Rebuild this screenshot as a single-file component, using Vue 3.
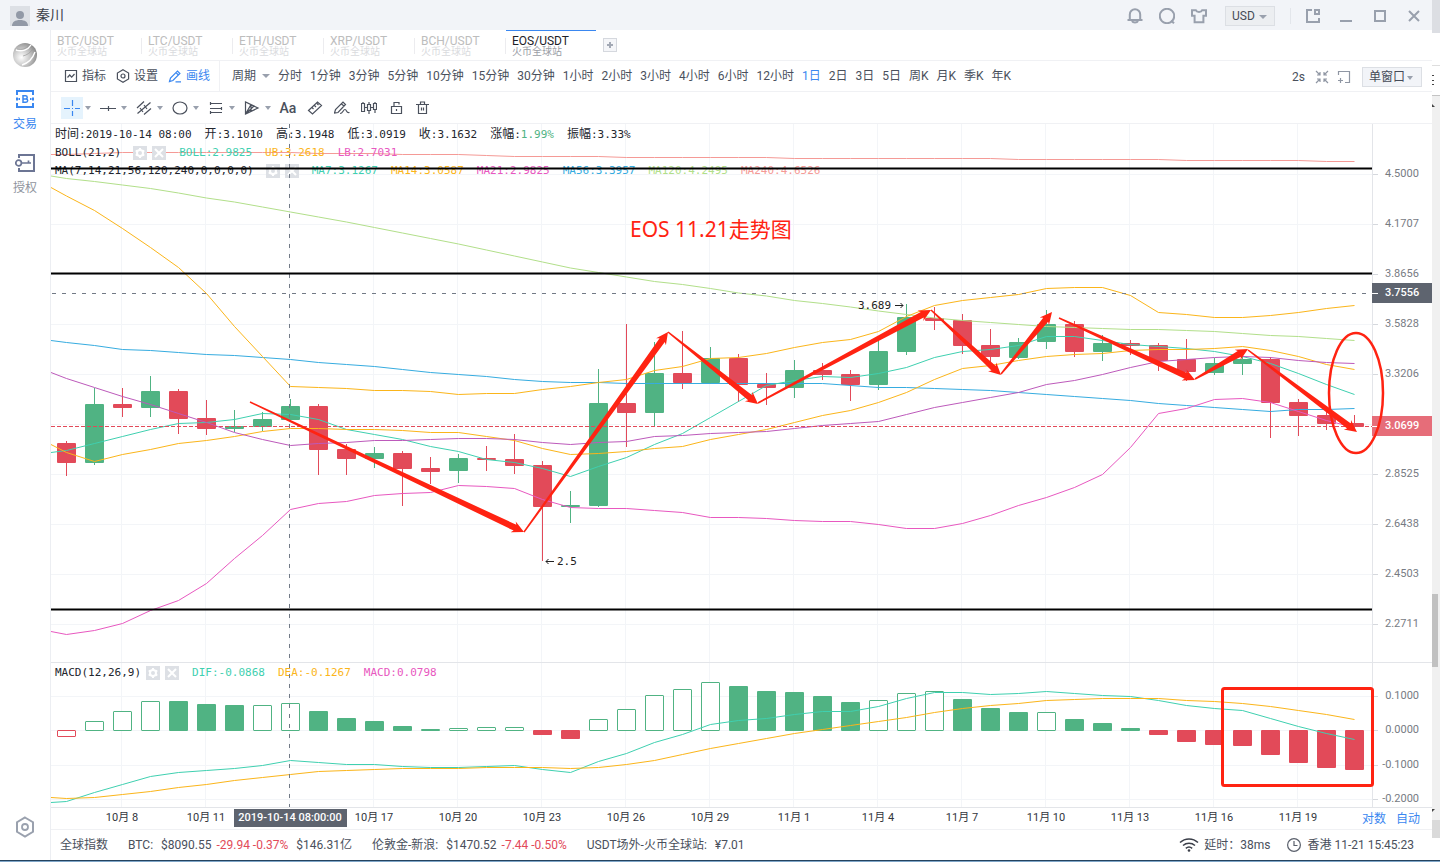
<script setup>
import { ref } from 'vue'

const tabs = ['BTC/USDT', 'LTC/USDT', 'ETH/USDT', 'XRP/USDT', 'BCH/USDT', 'EOS/USDT']
const activeTab = ref('EOS/USDT')
const periods = ['分时', '1分钟', '3分钟', '5分钟', '10分钟', '15分钟', '30分钟', '1小时', '2小时', '3小时', '4小时', '6小时', '12小时', '1日', '2日', '3日', '5日', '周K', '月K', '季K', '年K']
const activePeriod = ref('1日')

const STEP = 28
const LEFT = 51
const center = (i) => 66.5 + STEP * i

// direction, high, body top, body bottom, low
const candles = [
  ['d', 441, 443, 463, 476], ['u', 388, 404, 463, 465], ['d', 388, 404, 408, 417], ['u', 376, 391, 408, 417],
  ['d', 389, 391, 419, 434], ['d', 400, 418, 429, 435], ['u', 410, 426, 429, 432], ['u', 412, 419, 427, 431],
  ['u', 399, 406, 420, 422], ['d', 404, 406, 450, 475], ['d', 444, 449, 459, 475], ['u', 447, 453, 459, 468],
  ['d', 451, 453, 469, 506], ['d', 457, 468, 472, 484], ['u', 454, 458, 471, 483], ['d', 446, 458, 460, 471],
  ['d', 434, 459, 466, 474], ['d', 461, 465, 507, 561], ['u', 491, 505, 507, 523], ['u', 369, 403, 506, 507],
  ['d', 324, 403, 413, 447], ['u', 342, 373, 413, 426], ['d', 331, 373, 383, 389], ['u', 347, 358, 383, 384],
  ['d', 354, 358, 385, 402], ['d', 373, 384, 388, 405], ['u', 360, 370, 388, 398], ['d', 363, 370, 375, 380],
  ['d', 370, 374, 385, 401], ['u', 340, 351, 385, 390], ['u', 304, 317, 352, 355], ['d', 307, 318, 321, 330],
  ['d', 314, 320, 346, 354], ['d', 329, 345, 357, 363], ['u', 338, 342, 358, 359], ['u', 310, 324, 342, 349],
  ['d', 321, 324, 352, 357], ['u', 335, 343, 352, 361], ['d', 340, 343, 346, 355], ['d', 343, 345, 361, 371],
  ['d', 339, 359, 372, 381], ['u', 358, 363, 373, 375], ['u', 354, 359, 364, 375], ['d', 357, 359, 403, 438],
  ['d', 399, 402, 416, 436], ['d', 410, 415, 424, 430], ['d', 415, 423, 427, 428]
]

// each series starts on the left edge of the plot, then has one value per candle
const priceLines = [
  { color: '#f59a96', y: [154.5, 154.5, 153.5, 152.5, 152.5, 152.5, 152.5, 152.5, 152.5, 152.5, 153.5, 153.5, 153.5, 154.5, 154.5, 154.5, 155.5, 156.5, 156.5, 156.5, 156.5, 157.5, 157.5, 157.5, 157.5, 157.5, 157.5, 158.5, 158.5, 158.5, 158.5, 158.5, 158.5, 158.5, 158.5, 159.5, 159.5, 159.5, 159.5, 159.5, 159.5, 160.5, 160.5, 160.5, 160.5, 160.5, 161.5, 161.5] },
  { color: '#b2df8a', y: [176, 178.5, 181.5, 185, 188.5, 193, 198, 202, 207, 212, 217, 222, 227.5, 233, 238.5, 244, 250, 256, 262, 268, 272.5, 277, 281.5, 284.5, 288.5, 293, 296, 300.5, 303.5, 307, 311, 314.5, 318, 320.5, 322.5, 324.5, 326.5, 327.5, 328.5, 329.5, 329.5, 330.5, 331.5, 333.5, 335.5, 336.5, 338.5, 340.5] },
  { color: '#36ace0', y: [340.5, 342.5, 345.5, 349.5, 350.5, 352.5, 354.5, 355.5, 357.5, 359.5, 362.5, 364.5, 366.5, 369.5, 372.5, 374.5, 376.5, 379.5, 381.5, 382.5, 382.5, 383.5, 383.5, 383.5, 383.5, 383.5, 383.5, 383.5, 383.5, 385.5, 387.5, 387.5, 388.5, 389.5, 390.5, 392.5, 394.5, 396.5, 398.5, 400.5, 403.5, 405.5, 407.5, 409.5, 411.5, 409.5, 409.5, 408.5] },
  { color: '#fbb51a', y: [187.5, 196, 210.5, 228.5, 247.5, 267.5, 293.5, 326.5, 356.5, 386.5, 387.5, 388.5, 390.5, 390.5, 391.5, 394.5, 393.5, 393.5, 389.5, 386.5, 382.5, 379.5, 370.5, 366.5, 358.5, 357.5, 353.5, 347.5, 342.5, 339.5, 331.5, 316.5, 305.5, 300.5, 297.5, 294.5, 288.5, 287.5, 287.5, 295.5, 312.5, 314.5, 317.5, 317.5, 315.5, 312.5, 308.5, 305.5] },
  { color: '#e858c0', y: [631.5, 634.5, 630.5, 623.5, 610.5, 600.5, 583.5, 558.5, 535.5, 509.5, 503.5, 501.5, 495.5, 493.5, 492.5, 485.5, 486.5, 488.5, 499.5, 507.5, 508.5, 508.5, 510.5, 512.5, 517.5, 517.5, 518.5, 520.5, 521.5, 521.5, 524.5, 528.5, 528.5, 523.5, 515.5, 505.5, 497.5, 487.5, 474.5, 447.5, 413.5, 408.5, 399.5, 398.5, 402.5, 411.5, 420.5, 427.5] },
  { color: '#3fd0b0', y: [452.5, 450.5, 443.5, 436.5, 429.5, 423.5, 422.5, 419.5, 413.5, 414.5, 419.5, 429.5, 434.5, 439.5, 446.5, 451.5, 459.5, 462.5, 468.5, 476.5, 466.5, 457.5, 444.5, 433.5, 417.5, 401.5, 385.5, 380.5, 376.5, 377.5, 373.5, 367.5, 357.5, 351.5, 349.5, 345.5, 336.5, 336.5, 340.5, 344.5, 346.5, 348.5, 351.5, 356.5, 363.5, 373.5, 384.5, 394.5] },
  { color: '#fbb51a', y: [444.5, 452.5, 461.5, 454.5, 449.5, 443.5, 440.5, 436.5, 431.5, 428.5, 428.5, 429.5, 429.5, 430.5, 432.5, 432.5, 436.5, 440.5, 448.5, 454.5, 453.5, 451.5, 448.5, 446.5, 439.5, 434.5, 429.5, 422.5, 415.5, 410.5, 402.5, 392.5, 379.5, 368.5, 365.5, 360.5, 356.5, 354.5, 353.5, 350.5, 349.5, 349.5, 348.5, 346.5, 350.5, 356.5, 364.5, 369.5] },
  { color: '#bd5abb', y: [372.5, 378.5, 387.5, 396.5, 404.5, 413.5, 422.5, 432.5, 439.5, 445.5, 443.5, 442.5, 440.5, 440.5, 439.5, 438.5, 438.5, 439.5, 442.5, 444.5, 442.5, 441.5, 436.5, 435.5, 433.5, 432.5, 431.5, 428.5, 425.5, 423.5, 421.5, 414.5, 407.5, 402.5, 397.5, 392.5, 384.5, 380.5, 374.5, 367.5, 361.5, 359.5, 357.5, 356.5, 357.5, 360.5, 362.5, 363.5] }
]

const macdLines = [
  { color: '#3fd0b0', y: [802.5, 801.5, 792.5, 784.5, 776.5, 772.5, 770.5, 768.5, 765.5, 760.5, 762.5, 764.5, 764.5, 766.5, 767.5, 767.5, 766.5, 765.5, 769.5, 772.5, 761.5, 753.5, 742.5, 734.5, 724.5, 720.5, 718.5, 714.5, 711.5, 711.5, 706.5, 698.5, 692.5, 692.5, 694.5, 693.5, 691.5, 693.5, 695.5, 696.5, 700.5, 705.5, 708.5, 710.5, 718.5, 726.5, 733.5, 739.5] },
  { color: '#fbb51a', y: [797.5, 798.5, 797.5, 794.5, 791.5, 787.5, 784.5, 780.5, 777.5, 774.5, 771.5, 770.5, 769.5, 768.5, 768.5, 768.5, 767.5, 767.5, 767.5, 768.5, 767.5, 764.5, 760.5, 754.5, 748.5, 743.5, 738.5, 733.5, 729.5, 725.5, 721.5, 717.5, 712.5, 708.5, 705.5, 703.5, 700.5, 699.5, 698.5, 698.5, 698.5, 700.5, 701.5, 703.5, 706.5, 710.5, 714.5, 719.5] }
]

const points = (y) => y.map((v, k) => `${k === 0 ? LEFT : center(k - 1)},${v}`).join(' ')

// far edge of each bar; a negative value is a bar drawn as an outline
const ZERO = 730
const macdBars = [-737, -721, -711, -701, 701, 704, 705, -705, -703, 711, 718, 721, 726, 729, -728, -727, -727, 735, 739, -719, -709, -695, -689, -682, 686, 691, 692, 696, 702, -700, -693, -691, 699, 708, 712, -712, 719, 723, 728, 735, 742, 745, 746, 755, 763, 768, 770]
const bars = macdBars.map((v, i) => {
  const edge = Math.abs(v)
  const down = edge > 731
  return {
    x: 57 + STEP * i,
    y: down ? ZERO : edge,
    h: down ? edge - ZERO : 731 - edge,
    hollow: v < 0,
    color: down ? '#e24a59' : '#50b383'
  }
})

const gridX = Array.from({ length: 15 }, (_, i) => 121.5 + 84 * i)
const priceTicks = [
  [174.5, '4.5000'], [224.5, '4.1707'], [274.5, '3.8656'], [324.5, '3.5828'], [374.5, '3.3206'],
  [424.5, ''], [474.5, '2.8525'], [524.5, '2.6438'], [574.5, '2.4503'], [624.5, '2.2711']
]
const macdTicks = [[696.5, '0.1000'], [730.5, '0.0000'], [765.5, '-0.1000'], [799.5, '-0.2000']]
const dates = ['10月 8', '10月 11', '', '10月 17', '10月 20', '10月 23', '10月 26', '10月 29', '11月 1', '11月 4', '11月 7', '11月 10', '11月 13', '11月 16', '11月 19']

const arrow = ([x1, y1, x2, y2]) => {
  const len = Math.hypot(x2 - x1, y2 - y1)
  const ux = (x2 - x1) / len
  const uy = (y2 - y1) / len
  const at = (d, s) => `${(x1 + ux * d - uy * s).toFixed(1)},${(y1 + uy * d + ux * s).toFixed(1)}`
  return [at(0, 0.8), at(len - 10, 3.2), at(len - 12, 6), at(len, 0), at(len - 12, -6), at(len - 10, -3.2), at(0, -0.8)].join(' ')
}
const arrows = [
  [250, 402, 524, 532], [524, 532, 668, 332], [668, 332, 758, 404], [758, 403, 931, 310], [931, 310, 1001, 375],
  [1001, 374, 1052, 312], [1059, 318, 1195, 380], [1195, 379, 1248, 349], [1248, 350, 1357, 432]
].map(arrow)

const ohlc = [
  ['时间', '2019-10-14 08:00'], ['开', '3.1010'], ['高', '3.1948'], ['低', '3.0919'], ['收', '3.1632'],
  ['涨幅', '1.99%', 'gain'], ['振幅', '3.33%']
]
const legends = [
  { name: 'BOLL(21,2)', items: [['BOLL:2.9825', '#3fd0b0'], ['UB:3.2618', '#fbb51a'], ['LB:2.7031', '#e858c0']] },
  { name: 'MA(7,14,21,56,120,240,0,0,0,0)', items: [['MA7:3.1267', '#3fd0b0'], ['MA14:3.0587', '#fbb51a'], ['MA21:2.9825', '#e858c0'], ['MA56:3.3957', '#36ace0'], ['MA120:4.2495', '#b2df8a'], ['MA240:4.6526', '#f59a96']] }
]
const macdLegend = { name: 'MACD(12,26,9)', items: [['DIF:-0.0868', '#3fd0b0'], ['DEA:-0.1267', '#fbb51a'], ['MACD:0.0798', '#e858c0']] }

const gear = 'M7 2v2M7 10v2M2.7 4.5l1.700 1M9.600 8.500l1.700 1M2.700 9.500l1.700-1M9.600 5.500l1.700-1'
const quotes = [
  { name: 'BTC:', price: '$8090.55', change: '-29.94 -0.37%', extra: '$146.31亿' },
  { name: '伦敦金-新浪:', price: '$1470.52', change: '-7.44 -0.50%' },
  { name: 'USDT场外-火币全球站:', price: '¥7.01' }
]
</script>

<template>
  <div class="screen">
    <div class="window">
      <header class="titlebar">
        <svg class="avatar" viewBox="0 0 20 20"><rect width="20" height="20" fill="#dde0e5" /><circle cx="10" cy="9" r="4" fill="#9299a6" /><path d="M2 20c0-4 3-6 8-6s8 2 8 6z" fill="#9299a6" /></svg>
        <span class="user">秦川</span>
        <div class="grow"></div>
        <button class="t-btn" aria-label="通知"><svg viewBox="0 0 16 16"><path d="M0.500 12h15M2.800 12V6.500a5.200 5.200 0 0 1 10.400 0V12M5 13a3.200 2.400 0 0 0 6 0" /></svg></button>
        <button class="t-btn" aria-label="消息"><svg viewBox="0 0 16 16"><circle cx="8" cy="8" r="7.2" /><path d="M12 12.5l3 2.8" /></svg></button>
        <button class="t-btn" aria-label="皮肤"><svg viewBox="0 0 16 16"><path d="M1 2.2h3.8c1 2.4 5.4 2.4 6.4 0H15v5.6h-2.6v6.4H3.6V7.8H1z" /></svg></button>
        <div class="select usd">
          <select aria-label="计价货币"><option>USD</option></select>
          <svg viewBox="0 0 8 4"><path d="M0 0h8l-4 4z" /></svg>
        </div>
        <i class="sep"></i>
        <button class="w-btn" aria-label="弹出"><svg viewBox="0 0 16 16"><path d="M8 2H3v12h12V10M11 2h4v4h-4z" /></svg></button>
        <button class="w-btn" aria-label="最小化"><svg viewBox="0 0 16 16"><path d="M2 13h12" /></svg></button>
        <button class="w-btn" aria-label="最大化"><svg viewBox="0 0 16 16"><path d="M3 3h10v10H3z" /></svg></button>
        <button class="w-btn" aria-label="关闭"><svg viewBox="0 0 16 16"><path d="M3 3l10 10M13 3L3 13" /></svg></button>
      </header>

      <div class="body">
        <nav class="side">
          <svg class="globe" viewBox="0 0 24 24">
            <defs><radialGradient id="ball" cx="0.35" cy="0.6" r="0.7"><stop offset="0" stop-color="#fff" /><stop offset="0.5" stop-color="#c9c9c9" /><stop offset="1" stop-color="#858585" /></radialGradient></defs>
            <circle cx="12" cy="12" r="12" fill="url(#ball)" />
            <path d="M3 7c6 2 12 0 15-5M9 22c6-2 11-7 13-13" fill="none" stroke="#fff" stroke-width="1.4" />
            <path d="M4 6c5 1 9 0 12-4M20 6c-3 4-6 6-10 7" fill="none" stroke="#999" stroke-width="0.7" />
          </svg>
          <a href="#trade" class="s-item on">
            <svg viewBox="0 0 20 20"><path d="M2 6V2h16v4M18 14v4H2v-4M2 8.5v3M18 8.5v3M3.5 10H5M15 10h1.5" stroke-width="2" /><path d="M8 6.7h2.6a1.6 1.6 0 0 1 0 3.2H8zM8 9.9h3a1.7 1.7 0 0 1 0 3.4H8z" stroke-width="1.5" /></svg>
            <span>交易</span>
          </a>
          <a href="#auth" class="s-item">
            <svg viewBox="0 0 20 20"><path d="M4 5V2h15v16H4v-3" stroke-width="2" /><circle cx="3.6" cy="10" r="2.8" stroke-width="1.7" /><path d="M6.4 10H16M13.5 10V7.5" stroke-width="1.7" /></svg>
            <span>授权</span>
          </a>
          <div class="grow"></div>
          <button class="s-set" aria-label="设置"><svg viewBox="0 0 20 22"><path d="M10 1.5l8 4.7v9.6l-8 4.7-8-4.7V6.2z" stroke-width="2" /><circle cx="10" cy="11" r="3" stroke-width="1.8" /></svg></button>
        </nav>

        <main class="main">
          <div class="tabs">
            <button v-for="t in tabs" :key="t" class="tab" :class="{ active: t === activeTab }" @click="activeTab = t">
              <span>{{ t }}</span><small>火币全球站</small>
            </button>
            <button class="add" aria-label="添加"><svg viewBox="0 0 8 8"><path d="M4 1v6M1 4h6" /></svg></button>
          </div>

          <div class="bar">
            <div class="modes">
              <button><svg viewBox="0 0 14 14"><path d="M1.5 1.5h11v11h-11zM3.5 8.5l2.2-2.5 2 2.2L10.5 5" /></svg>指标</button>
              <button><svg viewBox="0 0 14 14"><path d="M7 0.8l5.6 3.2v6L7 13.2 1.4 10V4z" /><circle cx="7" cy="7" r="2" /></svg>设置</button>
              <button class="blue"><svg viewBox="0 0 14 14"><path d="M1.5 12.5l1-3.4 7-7 2.4 2.4-7 7zM8 3.6l2.4 2.4M7.5 12.8H13" /></svg>画线</button>
            </div>
            <div class="cycle"><button>周期<svg viewBox="0 0 8 4"><path d="M0 0h8l-4 4z" /></svg></button></div>
            <div class="periods">
              <button v-for="p in periods" :key="p" :class="{ blue: p === activePeriod }" @click="activePeriod = p">{{ p }}</button>
            </div>
            <div class="grow"></div>
            <div class="tail">
              <span>2s</span>
              <button aria-label="收起"><svg viewBox="0 0 14 14"><path d="M1 1l3.500 3.500M5 2v3H2M13 1L9.500 4.500M9 2v3h3M1 13l3.500-3.500M5 12V9H2M13 13L9.500 9.500M9 12V9h3" /></svg></button>
              <button aria-label="新窗口"><svg viewBox="0 0 14 14"><path d="M1.500 5V1.500h11v11H8M3.500 8v5M1 10.500h5" /></svg></button>
              <div class="select pane">
                <select aria-label="窗口布局"><option>单窗口</option></select>
                <svg viewBox="0 0 8 4"><path d="M1 0h6l-3 4z" /></svg>
              </div>
            </div>
          </div>

          <div class="tools">
            <button class="tool on" aria-label="十字线"><svg viewBox="0 0 16 16"><path d="M8.500 0v6M8.500 11v5M0 8.500h6M11 8.500h5M8 8.500h1" /></svg></button><i class="caret"></i>
            <button class="tool" aria-label="直线"><svg viewBox="0 0 16 16"><path d="M0 8.500h16M8.500 6v5" /></svg></button><i class="caret"></i>
            <button class="tool" aria-label="平行线"><svg viewBox="0 0 16 16"><path d="M1 8L8 1.500M1.500 13.500L14.500 2.500M8 14.500L15 8.500M4 8l3 4M8 5l3 4" /></svg></button><i class="caret"></i>
            <button class="tool" aria-label="椭圆"><svg viewBox="0 0 16 16"><ellipse cx="8" cy="8" rx="7" ry="6" /></svg></button><i class="caret"></i>
            <button class="tool" aria-label="水平线"><svg viewBox="0 0 16 16"><path d="M2 3.500h12M2 8.500h12M2 12.500h12M2.500 2v3M13.500 7v3M2.500 11v3" /></svg></button><i class="caret"></i>
            <button class="tool" aria-label="扇形线"><svg viewBox="0 0 16 16"><path d="M1.500 2v12L14 8zM1.500 14L7 4.600M1.500 14L10 6M7 5v6" /></svg></button><i class="caret"></i>
            <div class="plain">
              <button class="tool text">Aa</button>
              <button class="tool" aria-label="标尺"><svg viewBox="0 0 16 16"><path d="M1.500 10.500l9-8.500 4 3.500-9 8.500zM5 7.500l1.500 1.500M7.500 5.500L9 7M10 3.500L11.500 5" /></svg></button>
              <button class="tool" aria-label="画笔"><svg viewBox="0 0 16 16"><path d="M0.500 13l1-3.500 7.500-7.500 2.500 2.500L4 12.500zM7.500 4L10 6M6 13.500c3 0 3-4 5-4s1 4 4.500 3" /></svg></button>
              <button class="tool" aria-label="K线"><svg viewBox="0 0 16 16"><path d="M0.500 3.500h3v8h-3zM6.500 4.500h3v6h-3zM12.500 3.500h3v6h-3zM2 2v1.500M8 2v2.500M8 10.500V14M14 2v1.500M14 9.500V13M3.500 7.500h3M9.500 7.500h3" /></svg></button>
              <button class="tool" aria-label="锁定"><svg viewBox="0 0 16 16"><path d="M3.500 6.500h10v7h-10zM6 6.500V2.500h5v2M8.500 9v2" /></svg></button>
              <button class="tool" aria-label="删除"><svg viewBox="0 0 16 16"><path d="M1 4.500h13M3.500 4.500v9h8v-9M5.500 4V2h4v2M6.500 7.500v3M8.500 7.500v3" /></svg></button>
            </div>
          </div>

          <section class="panel">
            <svg class="plot" viewBox="51 124 1381 539">
              <g stroke="#f3f5f8">
                <line v-for="x in gridX" :key="x" :x1="x" :x2="x" y1="124" y2="662" />
                <line v-for="t in priceTicks" :key="t[0]" x1="51" x2="1372" :y1="t[0]" :y2="t[0]" />
              </g>
              <path d="M1372.500 124V663M51 662.500H1432" stroke="#e3e5e9" />
              <g stroke="#d5d8dd"><line v-for="t in priceTicks" :key="t[0]" x1="1373" x2="1378" :y1="t[0]" :y2="t[0]" /></g>
              <g v-for="(c, i) in candles" :key="i" :fill="c[0] === 'u' ? '#50b383' : '#e24a59'">
                <rect :x="66 + 28 * i" :y="c[1]" width="1" :height="c[4] - c[1]" />
                <rect :x="57 + 28 * i" :y="c[2]" width="19" :height="c[3] - c[2]" rx="1" />
              </g>
              <polyline v-for="(l, i) in priceLines" :key="i" :points="points(l.y)" fill="none" :stroke="l.color" />
            </svg>
            <div class="legend">
              <div class="row first">
                <span v-for="o in ohlc" :key="o[0]"><b>{{ o[0] }}</b>:<em :class="o[2]">{{ o[1] }}</em></span>
              </div>
              <div v-for="l in legends" :key="l.name" class="row">
                <span>{{ l.name }}</span>
                <div class="ops">
                  <button aria-label="设置指标"><svg viewBox="0 0 14 14"><path :d="gear" /><circle cx="7" cy="7" r="3" /></svg></button>
                  <button aria-label="移除指标"><svg viewBox="0 0 14 14"><path d="M3 3l8 8M11 3l-8 8" /></svg></button>
                </div>
                <span v-for="m in l.items" :key="m[0]" :style="{ color: m[1] }">{{ m[0] }}</span>
              </div>
            </div>
            <svg class="plot marks" viewBox="51 124 1381 539">
              <path d="M51 426.500H1372" stroke="#e24a59" stroke-dasharray="4 2" />
              <path d="M52 293.500H1372M289.500 124V662" stroke="#727a86" stroke-dasharray="4 6" />
              <path d="M51 168.500H1372M51 273.500H1372M51 609.500H1372" stroke="#000" stroke-width="2" />
              <g class="axis"><text v-for="t in priceTicks" :key="t[0]" x="1385" :y="t[0] + 2.5">{{ t[1] }}</text></g>
              <g class="mono">
                <text x="858" y="309">3.689</text><text x="557" y="565">2.5</text>
                <path d="M895 305.500h8M900.500 303l2.500 2.500-2.500 2.500M554 561.500h-8M548.500 559l-2.500 2.500 2.500 2.500" fill="none" stroke="#222" />
              </g>
              <g class="flag">
                <rect x="1372" y="283" width="60" height="20" fill="#5e646f" /><text x="1385" y="296">3.7556</text>
                <rect x="1372" y="416" width="60" height="20" fill="#e66d79" /><text x="1385" y="429">3.0699</text>
                <path d="M1372 293.500h6M1372 426.500h6" stroke="#fff" />
              </g>
              <g fill="#ff2312">
                <polygon v-for="a in arrows" :key="a" :points="a" />
                <text class="note" x="630" y="237">EOS 11.21走势图</text>
              </g>
              <ellipse cx="1356" cy="393" rx="27" ry="60" fill="none" stroke="#ff2312" stroke-width="2.500" />
            </svg>
          </section>

          <section class="panel">
            <svg class="plot" viewBox="51 663 1381 166">
              <g stroke="#f3f5f8">
                <line v-for="x in gridX" :key="x" :x1="x" :x2="x" y1="663" y2="807" />
                <line v-for="t in macdTicks" :key="t[0]" x1="51" x2="1372" :y1="t[0]" :y2="t[0]" />
              </g>
              <path d="M1372.500 663V807M51 807.500H1432" stroke="#e3e5e9" />
              <g stroke="#d5d8dd"><line v-for="t in macdTicks" :key="t[0]" x1="1373" x2="1378" :y1="t[0]" :y2="t[0]" /></g>
              <template v-for="b in bars" :key="b.x">
                <rect v-if="b.hollow" :x="b.x + 0.5" :y="b.y + 0.5" width="18" :height="b.h - 1" rx="0.500" fill="#fff" :stroke="b.color" />
                <rect v-else :x="b.x" :y="b.y" width="19" :height="b.h" rx="1" :fill="b.color" />
              </template>
              <polyline v-for="(l, i) in macdLines" :key="i" :points="points(l.y)" fill="none" :stroke="l.color" />
            </svg>
            <div class="legend">
              <div class="row macd">
                <span>{{ macdLegend.name }}</span>
                <div class="ops">
                  <button aria-label="设置指标"><svg viewBox="0 0 14 14"><path :d="gear" /><circle cx="7" cy="7" r="3" /></svg></button>
                  <button aria-label="移除指标"><svg viewBox="0 0 14 14"><path d="M3 3l8 8M11 3l-8 8" /></svg></button>
                </div>
                <span v-for="m in macdLegend.items" :key="m[0]" :style="{ color: m[1] }">{{ m[0] }}</span>
              </div>
            </div>
            <svg class="plot marks" viewBox="51 663 1381 166">
              <path d="M289.500 663V807" stroke="#727a86" stroke-dasharray="4 6" stroke-dashoffset="9" />
              <g class="axis"><text v-for="t in macdTicks" :key="t[0]" x="1419" :y="t[0] + 2.5" text-anchor="end">{{ t[1] }}</text></g>
              <g class="dates"><text v-for="(d, i) in dates" :key="i" :x="gridX[i] + 0.5" y="821">{{ d }}</text></g>
              <g class="flag"><rect x="234" y="809" width="113" height="18" fill="#5e646f" /><text x="290" y="821" text-anchor="middle">2019-10-14 08:00:00</text></g>
              <rect x="1222.500" y="688.500" width="150" height="97" rx="2" fill="none" stroke="#ff2312" stroke-width="3" />
            </svg>
            <div class="scale"><button>对数</button><button>自动</button></div>
          </section>

          <footer class="status">
            <span class="q">全球指数</span>
            <span v-for="q in quotes" :key="q.name" class="q">{{ q.name }}<span class="price">{{ q.price }}</span><span v-if="q.change" class="chg">{{ q.change }}</span><span v-if="q.extra" class="price">{{ q.extra }}</span></span>
            <div class="grow"></div>
            <svg class="wifi" viewBox="0 0 20 16"><path d="M1 5.500a13 13 0 0 1 18 0M4 8.500a9 9 0 0 1 12 0M6.800 11.300a5 5 0 0 1 6.400 0" /><circle cx="10" cy="13.500" r="1.300" /></svg>
            <span class="delay">延时：38ms</span>
            <svg class="clock" viewBox="0 0 14 14"><circle cx="7" cy="7" r="6.400" /><path d="M7 3v4.500h3.500" /></svg>
            <span class="time">香港 11-21 15:45:23</span>
          </footer>
        </main>
      </div>
    </div>

    <aside class="behind">
      <i class="b1"></i><i class="b2"></i><i class="b3"><i></i></i>
      <div class="track"><i class="t-up"></i><i class="thumb"></i><i class="t-down"></i></div>
      <i class="b4"></i><i class="b5"></i>
    </aside>
  </div>
  <div class="under"></div>
</template>

<style>
body { background: #fff; }
</style>

<style scoped>
* { box-sizing: border-box; }
.screen { display: flex; min-height: 860px; font: 12px/16px Roboto, "Noto Sans CJK SC", sans-serif; color: #4a505c; }
button { border: 0; padding: 0; margin: 0; background: none; font: inherit; color: inherit; display: flex; align-items: center; white-space: nowrap; }
svg { display: block; }
.grow { flex: 1; }
.window { flex: 1; min-width: 0; display: flex; flex-direction: column; background: #fff; }
.titlebar { height: 30px; background: #f2f4f8; display: flex; align-items: center; padding: 2px 1px 0 10px; }
.avatar { width: 20px; height: 20px; }
.user { font-size: 14px; line-height: 14px; margin-left: 6px; margin-bottom: 2px; color: #3a3f4a; }
.t-btn, .w-btn { width: 32px; height: 28px; justify-content: center; }
.w-btn { width: 34px; }
.t-btn svg, .w-btn svg { width: 16px; height: 16px; fill: none; stroke: #99a0ad; stroke-width: 2; }
.select { position: relative; background: #eceef1; border: 1px solid #dcdfe4; height: 20px; }
.select select { appearance: none; border: 0; background: none; font: inherit; color: #454b57; width: 100%; height: 18px; padding: 0 0 0 6px; margin: 0; outline: 0; display: block; }
.select svg { position: absolute; right: 7px; top: 8px; width: 8px; height: 4px; fill: #99a0ad; pointer-events: none; }
.usd { width: 50px; margin-left: 10px; }
.pane { width: 60px; background: #f2f4f8; }
.sep { width: 1px; height: 16px; background: #e3e6eb; margin: 0 4px 0 15px; }

.body { flex: 1; display: flex; }
.side { width: 51px; border-right: 1px solid #eceef2; display: flex; flex-direction: column; align-items: center; padding-top: 13px; }
.globe { width: 24px; height: 24px; margin-bottom: 22px; }
.s-item { display: flex; flex-direction: column; align-items: center; gap: 7px; text-decoration: none; color: #8f949d; margin-bottom: 21px; }
.s-item svg, .s-set svg { width: 20px; height: 20px; fill: none; stroke: #6c7594; }
.s-item.on { color: #3a87f0; }
.s-item.on svg { stroke: #3a87f0; }
.s-set { margin-bottom: 22px; }
.s-set svg { height: 22px; stroke: #9aa1ae; }

.main { flex: 1; min-width: 0; display: flex; flex-direction: column; }
.tabs { height: 31px; border-bottom: 1px solid #f0f1f4; display: flex; align-items: center; }
.tab { position: relative; width: 91px; height: 30px; flex-direction: column; align-items: flex-start; justify-content: center; padding: 1px 0 0 6px; color: #bdbdbd; }
.tab span { line-height: 12px; }
.tab small { font-size: 10px; line-height: 10px; color: #dadbde; }
.tab:not(:nth-last-child(2))::after { content: ""; position: absolute; right: 0; top: 8px; height: 16px; width: 1px; background: #ececef; }
.tab.active { color: #1d2129; width: 90px; border-top: 1px solid #3a87f0; padding-top: 0; }
.tab.active small { color: #9b9ea6; }
.add { width: 14px; height: 14px; border: 1px solid #d5d8de; background: #f5f6f9; justify-content: center; margin-left: 7px; }
.add svg { width: 8px; height: 8px; stroke: #a3a9b5; stroke-width: 2; }

.bar { height: 31px; border-bottom: 1px solid #f0f1f4; display: flex; align-items: center; }
.modes { display: flex; gap: 10px; width: 169px; height: 30px; padding-left: 13px; border-right: 1px solid #f0f1f4; }
.modes button { gap: 4px; }
.modes svg, .tail button svg { width: 14px; height: 14px; fill: none; stroke: currentColor; stroke-width: 1.2; }
.blue { color: #3a87f0; }
.cycle { width: 58px; padding-left: 12px; }
.cycle svg { width: 8px; height: 4px; margin-left: 6px; fill: #99a0ad; }
.periods { display: flex; gap: 8px; }
.tail { display: flex; align-items: center; padding-right: 10px; padding-top: 2px; }
.tail button { margin-left: 8px; color: #8f96a3; }
.tail span { margin-right: 2px; }
.tail .pane { margin-left: 11px; }

.tools { height: 32px; border-bottom: 1px solid #f0f1f4; display: flex; align-items: center; padding-left: 10px; }
.tool { width: 22px; height: 22px; justify-content: center; }
.tool.on { background: #e5f3fd; }
.tool svg { width: 16px; height: 16px; fill: none; stroke: #4b515d; stroke-width: 1.2; }
.tool.on svg { stroke: #3a87f0; }
.tool.text { font-size: 14px; font-weight: 500; }
.caret { width: 14px; display: flex; justify-content: center; padding-right: 4px; }
.caret::after { content: ""; border: 3px solid transparent; border-top: 4px solid #99a0ad; border-bottom: 0; }
.plain { display: flex; gap: 5px; }

.panel { position: relative; }
.plot { width: 100%; height: auto; }
/* crosshair, drawn lines and notes lie over the legend */
.marks { position: absolute; left: 0; top: 0; pointer-events: none; }
.legend { position: absolute; left: 4px; top: 1px; font: 11px/18px "DejaVu Sans Mono", "Noto Sans CJK SC", monospace; color: #23262e; white-space: pre; }
.row { display: flex; align-items: center; height: 18px; gap: 13px; }
.row.first { height: 19px; }
.row b { font-size: 12px; font-weight: 400; }
.row em { font-style: normal; }
.gain { color: #50b383; }
.ops { display: flex; gap: 5px; margin-left: -1px; }
.macd .ops { margin-left: -8px; }
.ops button { width: 14px; height: 14px; background: #dde0e5; }
.ops svg { width: 14px; height: 14px; stroke: #fff; stroke-width: 2; fill: none; }
.axis text { font: 11px Roboto, sans-serif; fill: #777b83; }
.mono text { font: 11px "DejaVu Sans Mono", monospace; fill: #222; }
.flag text { font: 500 11px Roboto, sans-serif; fill: #fff; }
.dates text { font: 11px Roboto, "Noto Sans CJK SC", sans-serif; fill: #33363d; text-anchor: middle; }
.note { font: 21px "Noto Sans", "Noto Sans CJK SC", sans-serif; }
.scale { position: absolute; right: 12px; bottom: 2px; display: flex; gap: 10px; color: #3a87f0; }

.status { border-top: 1px solid #f0f1f4; height: 31px; display: flex; align-items: center; padding: 0 18px 0 9px; white-space: nowrap; }
.q { margin-right: 20px; }
.price { margin-left: 8px; }
.chg { margin-left: 5px; color: #e24a59; }
.wifi { width: 20px; height: 16px; fill: none; stroke: #3b3f49; stroke-width: 1.5; }
.wifi circle { fill: #3b3f49; stroke: none; }
.delay { margin: 0 17px 0 5px; }
.clock { width: 14px; height: 14px; fill: none; stroke: #5a606c; stroke-width: 1.2; margin-right: 6px; }

.behind { width: 8px; display: flex; flex-direction: column; background: #fff; }
.behind i { display: block; }
.b1 { height: 33px; background: #dcdee3; }
.b2 { height: 33px; border-bottom: 1px solid #dedede; }
.b3 { height: 30px; border-bottom: 1px solid #c4c4c4; padding-top: 9px; }
.b3 i { width: 2px; height: 1px; background: #444; box-shadow: 0 5px #444, 0 9px #444; }
.track { flex: 1; background: #f0f0f0; display: flex; flex-direction: column; }
.t-up { border-left: 3px solid #444; border-top: 3px solid transparent; width: 3px; height: 3px; margin-top: 8px; }
.thumb { width: 6px; height: 73px; background: #c1c1c1; margin-top: 487px; }
.t-down { width: 3px; border-left: 3px solid #444; border-bottom: 3px solid transparent; margin-top: 142px; }
.b4 { height: 18px; background: #dadada; }
.b5 { height: 22px; }
.under { height: 2px; background: linear-gradient(#24435e 50%, #7fa6c8 50%); }
</style>
